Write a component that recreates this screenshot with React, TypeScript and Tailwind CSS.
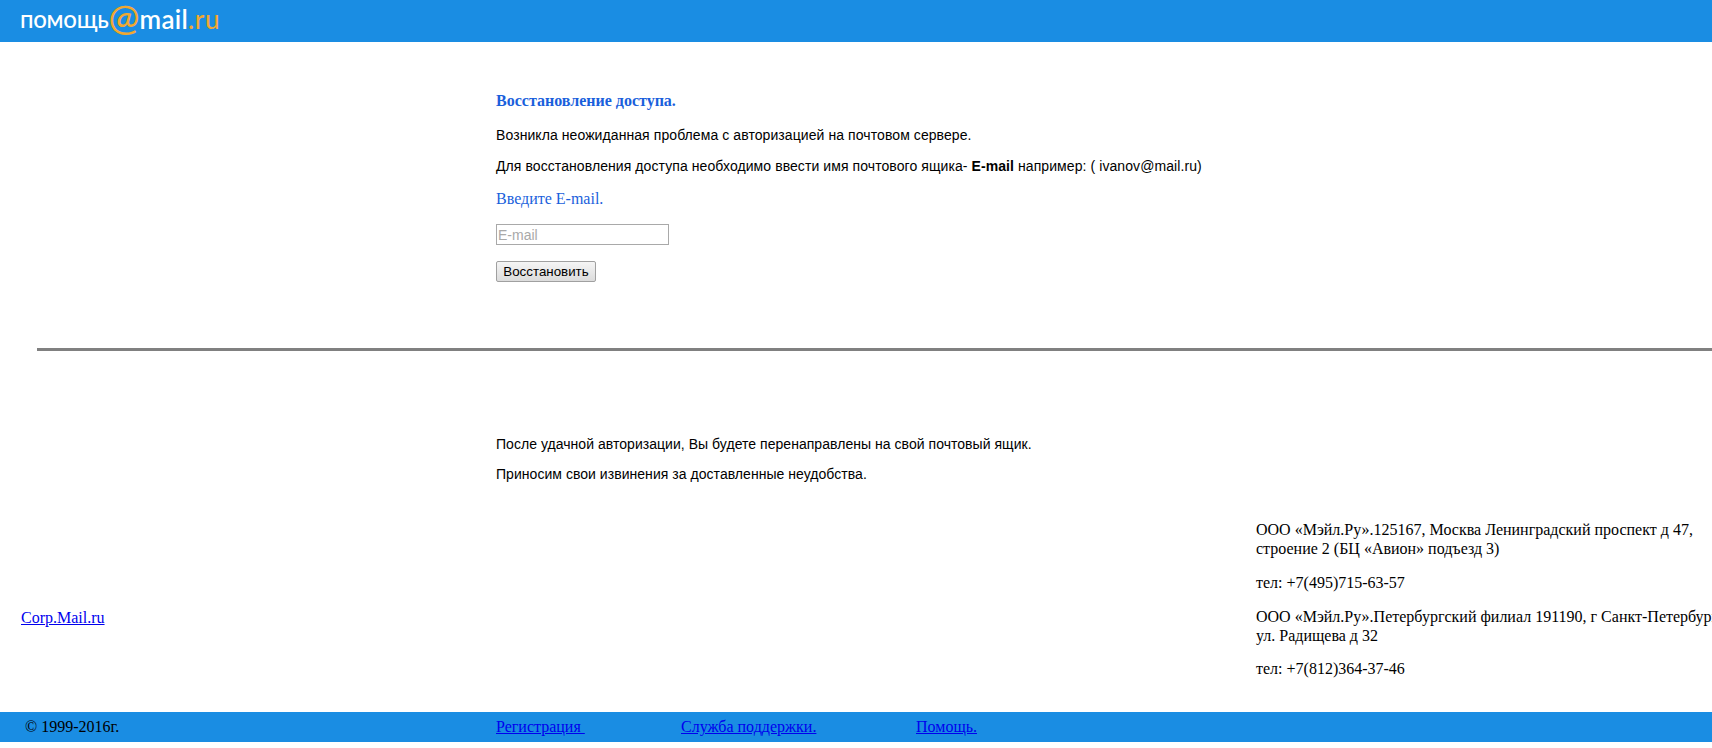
const serif = "font-['Liberation_Serif','Times_New_Roman',serif]";
const sans = "font-['Liberation_Sans',Arial,sans-serif]";

function Logo() {
  return (
    <div className="flex h-[38px] items-center pl-[20px] font-['Lato','Noto_Sans',sans-serif] text-white">
      <span className="text-[24px] leading-[38px] font-medium tracking-[-0.3px]">помощь</span>
      <span className="-translate-y-[2px] text-[37px] leading-[38px] font-medium text-[#f0a830]">@</span>
      <span className="text-[26px] leading-[38px] font-semibold tracking-[0.3px]">mail</span>
      <span className="text-[26px] leading-[38px] font-medium tracking-[0.6px] text-[#f0a830]">.ru</span>
    </div>
  );
}

function FooterLink({ label, className }: { label: string; className: string }) {
  return (
    <a href="#" className={`text-[#0000ee] underline ${className}`}>
      {label}
    </a>
  );
}

export default function App() {
  return (
    <div className={`flex h-[748px] w-[1712px] flex-col overflow-hidden bg-white text-[16px] leading-[18px] text-black ${serif}`}>
      {/* Header */}
      <header className="h-[42px] shrink-0 bg-[#1a8de3]">
        <Logo />
      </header>

      {/* Recovery form */}
      <main className="pl-[496px] pt-[50px]">
        <h1 className="text-[16px] leading-[18px] font-bold text-[#1a5fdc]">Восстановление доступа.</h1>
        <div className={`mt-[17px] text-[14px] leading-[16px] tracking-[0.08px] ${sans}`}>
          <p>Возникла неожиданная проблема с авторизацией на почтовом сервере.</p>
          <p className="mt-[15px]">
            Для восстановления доступа необходимо ввести имя почтового ящика- <b>E-mail</b> например: ( ivanov@mail.ru)
          </p>
        </div>
        <p className="mt-[16px] text-[#1a5fdc]">Введите E-mail.</p>
        <input
          placeholder="E-mail"
          className={`mt-[16px] block h-[21px] w-[173px] border border-[#a9a9a9] px-[1px] text-[14px] placeholder:text-[#a9a9a9] ${sans}`}
        />
        <button className={`mt-[16px] block h-[21px] w-[100px] rounded-[2px] border border-[#a0a0a0] bg-gradient-to-b from-[#f5f5f5] to-[#dcdcdc] text-[13.33px] leading-[19px] ${sans}`}>
          Восстановить
        </button>
      </main>

      <hr className="ml-[37px] mt-[66px] h-[3px] shrink-0 border-0 bg-[#808080]" />

      <section className={`pl-[496px] pt-[85px] text-[14px] leading-[16px] tracking-[0.04px] ${sans}`}>
        <p>После удачной авторизации, Вы будете перенаправлены на свой почтовый ящик.</p>
        <p className="mt-[14px]">Приносим свои извинения за доставленные неудобства.</p>
      </section>

      {/* Corp link and addresses */}
      <section className="mt-[38px] flex items-center">
        <FooterLink label="Corp.Mail.ru" className="ml-[21px] mt-[38px]" />
        <div className="ml-auto w-[456px] shrink-0 whitespace-nowrap leading-[19px]">
          <p>ООО «Мэйл.Ру».125167, Москва Ленинградский проспект д 47,<br />строение 2 (БЦ «Авион» подъезд 3)</p>
          <p className="mt-[15px]">тел: +7(495)715-63-57</p>
          <p className="mt-[15px]">ООО «Мэйл.Ру».Петербургский филиал 191190, г Санкт-Петербург,<br />ул. Радищева д 32</p>
          <p className="mt-[14px]">тел: +7(812)364-37-46</p>
        </div>
      </section>

      {/* Bottom bar */}
      <footer className="mt-[34px] flex h-[30px] shrink-0 items-center bg-[#1a8de3]">
        <span className="ml-[25px] w-[471px]">© 1999-2016г.</span>
        <FooterLink label="Регистрация " className="w-[185px] whitespace-pre" />
        <FooterLink label="Служба поддержки." className="w-[235px] whitespace-pre" />
        <FooterLink label="Помощь." className="whitespace-pre" />
      </footer>
    </div>
  );
}
